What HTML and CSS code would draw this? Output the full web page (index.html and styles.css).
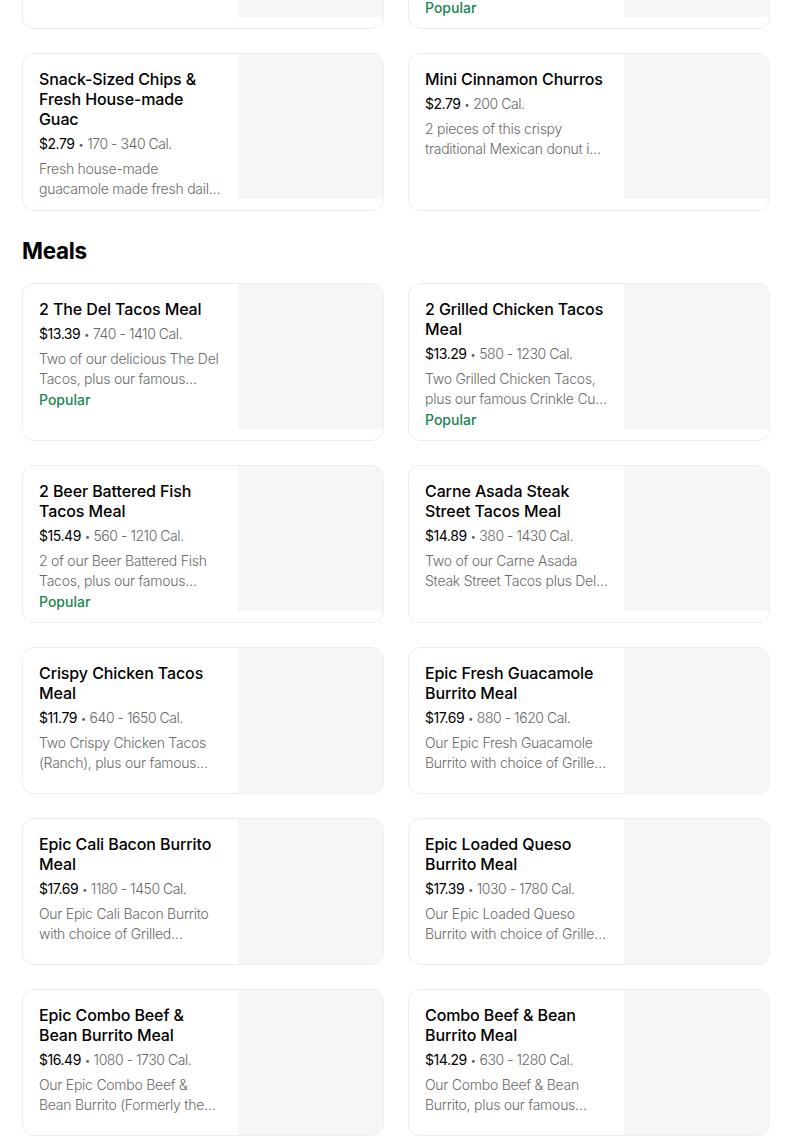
FILE: index.html
```html
<!DOCTYPE html>
<html lang="en">
<head>
<meta charset="utf-8">
<title>Menu</title>
<link rel="stylesheet" href="styles.css">
</head>
<body>
<main class="page">
  <section class="section">
    <div class="grid">
      <article class="card">
        <div class="info">
          <h3 class="title">Chips &amp; Fresh House-made Guac</h3>
          <p class="meta"><span class="price">$4.59</span><span class="dot">•</span><span class="cal">330 - 500 Cal.</span></p>
          <p class="desc">Crispy tortilla chips served with our fresh house-made guacamole made daily.</p>
        </div>
        <div class="thumb"></div>
      </article>
      <article class="card">
        <div class="info">
          <h3 class="title">Chili Cheese Crinkle Cut Fries</h3>
          <p class="meta"><span class="price">$3.99</span><span class="dot">•</span><span class="cal">650 Cal.</span></p>
          <p class="desc">Our famous Crinkle Cut Fries topped with chili and cheddar cheese.</p>
          <p class="badge">Popular</p>
        </div>
        <div class="thumb"></div>
      </article>
      <article class="card">
        <div class="info">
          <h3 class="title">Snack-Sized Chips &amp; Fresh House-made Guac</h3>
          <p class="meta"><span class="price">$2.79</span><span class="dot">•</span><span class="cal">170 - 340 Cal.</span></p>
          <p class="desc">Fresh house-made guacamole made fresh daily with ripe Hass avocados, served with crispy chips.</p>
        </div>
        <div class="thumb"></div>
      </article>
      <article class="card">
        <div class="info">
          <h3 class="title">Mini Cinnamon Churros</h3>
          <p class="meta"><span class="price">$2.79</span><span class="dot">•</span><span class="cal">200 Cal.</span></p>
          <p class="desc">2 pieces of this crispy traditional Mexican donut is coated in cinnamon sugar.</p>
        </div>
        <div class="thumb"></div>
      </article>
    </div>
  </section>

  <section class="section">
    <h2 class="section-title">Meals</h2>
    <div class="grid">
      <article class="card">
        <div class="info">
          <h3 class="title">2 The Del Tacos Meal</h3>
          <p class="meta"><span class="price">$13.39</span><span class="dot">•</span><span class="cal">740 - 1410 Cal.</span></p>
          <p class="desc">Two of our delicious The Del Tacos, plus our famous Crinkle Cut Fries and a drink.</p>
          <p class="badge">Popular</p>
        </div>
        <div class="thumb"></div>
      </article>
      <article class="card">
        <div class="info">
          <h3 class="title">2 Grilled Chicken Tacos Meal</h3>
          <p class="meta"><span class="price">$13.29</span><span class="dot">•</span><span class="cal">580 - 1230 Cal.</span></p>
          <p class="desc">Two Grilled Chicken Tacos, plus our famous Crinkle Cut Fries and a drink.</p>
          <p class="badge">Popular</p>
        </div>
        <div class="thumb"></div>
      </article>
      <article class="card">
        <div class="info">
          <h3 class="title">2 Beer Battered Fish Tacos Meal</h3>
          <p class="meta"><span class="price">$15.49</span><span class="dot">•</span><span class="cal">560 - 1210 Cal.</span></p>
          <p class="desc">2 of our Beer Battered Fish Tacos, plus our famous Crinkle Cut Fries and a drink.</p>
          <p class="badge">Popular</p>
        </div>
        <div class="thumb"></div>
      </article>
      <article class="card">
        <div class="info">
          <h3 class="title">Carne Asada Steak Street Tacos Meal</h3>
          <p class="meta"><span class="price">$14.89</span><span class="dot">•</span><span class="cal">380 - 1430 Cal.</span></p>
          <p class="desc">Two of our Carne Asada Steak Street Tacos plus Del Taco's famous Crinkle Cut Fries.</p>
        </div>
        <div class="thumb"></div>
      </article>
      <article class="card">
        <div class="info">
          <h3 class="title">Crispy Chicken Tacos Meal</h3>
          <p class="meta"><span class="price">$11.79</span><span class="dot">•</span><span class="cal">640 - 1650 Cal.</span></p>
          <p class="desc">Two Crispy Chicken Tacos (Ranch), plus our famous Crinkle Cut Fries and a drink.</p>
        </div>
        <div class="thumb"></div>
      </article>
      <article class="card">
        <div class="info">
          <h3 class="title">Epic Fresh Guacamole Burrito Meal</h3>
          <p class="meta"><span class="price">$17.69</span><span class="dot">•</span><span class="cal">880 - 1620 Cal.</span></p>
          <p class="desc">Our Epic Fresh Guacamole Burrito with choice of Grilled Chicken or Carne Asada.</p>
        </div>
        <div class="thumb"></div>
      </article>
      <article class="card">
        <div class="info">
          <h3 class="title">Epic Cali Bacon Burrito Meal</h3>
          <p class="meta"><span class="price">$17.69</span><span class="dot">•</span><span class="cal">1180 - 1450 Cal.</span></p>
          <p class="desc">Our Epic Cali Bacon Burrito with choice of Grilled Chicken or Carne Asada.</p>
        </div>
        <div class="thumb"></div>
      </article>
      <article class="card">
        <div class="info">
          <h3 class="title">Epic Loaded Queso Burrito Meal</h3>
          <p class="meta"><span class="price">$17.39</span><span class="dot">•</span><span class="cal">1030 - 1780 Cal.</span></p>
          <p class="desc">Our Epic Loaded Queso Burrito with choice of Grilled Chicken or Carne Asada.</p>
        </div>
        <div class="thumb"></div>
      </article>
      <article class="card">
        <div class="info">
          <h3 class="title">Epic Combo Beef &amp; Bean Burrito Meal</h3>
          <p class="meta"><span class="price">$16.49</span><span class="dot">•</span><span class="cal">1080 - 1730 Cal.</span></p>
          <p class="desc">Our Epic Combo Beef &amp; Bean Burrito (Formerly the Macho Combo Burrito), plus fries.</p>
        </div>
        <div class="thumb"></div>
      </article>
      <article class="card">
        <div class="info">
          <h3 class="title">Combo Beef &amp; Bean Burrito Meal</h3>
          <p class="meta"><span class="price">$14.29</span><span class="dot">•</span><span class="cal">630 - 1280 Cal.</span></p>
          <p class="desc">Our Combo Beef &amp; Bean Burrito, plus our famous Crinkle Cut Fries and a drink.</p>
        </div>
        <div class="thumb"></div>
      </article>
    </div>
  </section>
</main>
</body>
</html>
```

FILE: styles.css
```css
* { box-sizing: border-box; }

body {
  margin: 0;
  background: #ffffff;
  color: #000000;
  font-family: Inter, "Noto Sans", sans-serif;
}

.page {
  width: 748px;
  margin: -129px 0 0 22px;
}

.section-title {
  margin: 24px 0 16px;
  font-size: 22.5px;
  line-height: 32px;
  font-weight: 700;
  letter-spacing: -0.3px;
}

.grid {
  display: grid;
  grid-template-columns: 1fr 1fr;
  gap: 24px;
}

.card {
  display: flex;
  align-items: flex-start;
  border: 1px solid #eeeeee;
  border-radius: 12px;
  overflow: hidden;
  background: #ffffff;
}

.info {
  flex: 1;
  min-width: 0;
  padding: 15px 16px 11px;
  align-self: stretch;
}

.thumb {
  flex: none;
  width: 145px;
  height: 145px;
  background: #f6f6f6;
}

.title {
  margin: 0;
  font-size: 16px;
  line-height: 20px;
  font-weight: 500;
  letter-spacing: -0.1px;
}

.meta {
  margin: 5px 0 0;
  font-size: 14px;
  line-height: 20px;
  letter-spacing: -0.45px;
  color: #5e5e5e;
}

.price { color: #000000; }

.dot {
  display: inline-block;
  margin: 0 4px;
  font-size: 9px;
  vertical-align: 1px;
  color: #5e5e5e;
}

.cal {
  color: #666666;
  font-weight: 300;
}

.desc {
  margin: 4px 0 0;
  font-size: 14px;
  line-height: 20px;
  font-weight: 300;
  letter-spacing: -0.25px;
  color: #6b6b6b;
  display: -webkit-box;
  -webkit-line-clamp: 2;
  -webkit-box-orient: vertical;
  overflow: hidden;
}

.badge {
  margin: 0 0 -2px;
  font-size: 14px;
  line-height: 22px;
  font-weight: 500;
  color: #1a8550;
}
```
